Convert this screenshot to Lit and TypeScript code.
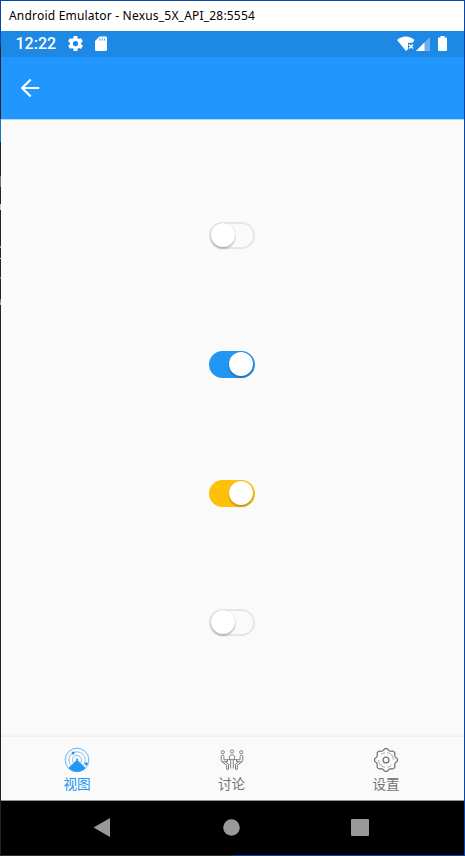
import { LitElement, html, css, svg } from "lit";
import { customElement, property } from "lit/decorators.js";

@customElement("toggle-switch")
class ToggleSwitch extends LitElement {
  @property({ type: Boolean, reflect: true }) on = false;
  @property({ reflect: true }) tone = "blue";

  static styles = css`
    :host { display: block; width: 46px; height: 27px; }
    .track {
      box-sizing: border-box; width: 46px; height: 27px; padding: 0 0 0 1px;
      border-radius: 14px; border: 2px solid #e6e6ea; background: #fafafa;
      display: flex; align-items: center; justify-content: flex-start;
    }
    .knob {
      width: 24px; height: 24px; border-radius: 50%; background: #fff; flex: none; margin: 0 0 1px -1px;
      box-shadow: 0 2px 2px rgba(0, 0, 0, 0.22), 0 0 1px rgba(0, 0, 0, 0.2);
    }
    :host([on]) .track { justify-content: flex-end; background: #2196f3; border-color: #2196f3; }
    :host([on][tone="amber"]) .track { background: #ffc107; border-color: #ffc107; }
  `;

  render() {
    return html`<div class="track"><div class="knob"></div></div>`;
  }
}

const gearOutline = (cx: number, cy: number, r: number, depth: number) => {
  const pts: string[] = [];
  for (let i = 0; i <= 96; i++) {
    const a = (i / 96) * Math.PI * 2;
    const q = r + depth * Math.tanh(1.8 * Math.cos(8 * a));
    pts.push(`${(cx + q * Math.cos(a)).toFixed(2)} ${(cy + q * Math.sin(a)).toFixed(2)}`);
  }
  return "M" + pts.join("L") + "Z";
};

const radarIcon = svg`
  <g fill="none" stroke="currentColor">
    <circle cx="13" cy="13" r="11.8" stroke-width=".7"/>
    <circle cx="13" cy="13" r="8.2" stroke-width=".55"/>
    <circle cx="13" cy="13" r="4.6" stroke-width=".55"/>
  </g>
  <path fill="currentColor" d="M13 12.8L21.6 20.9A11.8 11.8 0 0 1 4.4 20.9Z"/>
  <circle cx="13" cy="12.5" r="1" fill="currentColor"/>
  <circle cx="9.2" cy="6" r="1.5" fill="currentColor"/>
  <circle cx="22.3" cy="16.7" r="1.5" fill="currentColor"/>`;

const meetingIcon = svg`
  <g fill="none" stroke="currentColor" stroke-width=".9" stroke-linejoin="round">
    <circle cx="3.8" cy="5.2" r="1.6"/><circle cx="22.2" cy="5.2" r="1.6"/><circle cx="13" cy="4.4" r="1.6"/>
    <path d="M2.2 9.3C2.2 7.7 4.7 7.7 4.9 9.3V12.8H8.5V14.8H4C2.8 14.8 2.2 14 2.2 13ZM2.6 14.5L7.7 18.2V22.3H9.5V17.1L6.5 14.8"/>
    <path d="M23.8 9.3C23.8 7.7 21.3 7.7 21.1 9.3V12.8H17.5V14.8H22C23.2 14.8 23.8 14 23.8 13ZM23.4 14.5L18.3 18.2V22.3H16.5V17.1L19.5 14.8"/>
    <path d="M10.5 12V9.2C10.5 7.3 15.5 7.3 15.5 9.2V12M8.2 12.6H17.8M11.7 13V21.5M14.3 13V21.5"/>
  </g>`;

const settingsIcon = svg`
  <g fill="none" stroke="currentColor">
    <path d=${gearOutline(13, 13, 10.6, 0.9)} stroke-width="1.25"/>
    <circle cx="13" cy="13" r="2.9" stroke-width="1.3"/>
    <path stroke-width=".6" d="M5.6 13.1A7.4 7.4 0 0 0 12 20.3M8 7.6A7.4 7.4 0 0 1 12 5.7M14.2 5.7A7.4 7.4 0 0 1 20.4 12.7M18.2 18.3A7.4 7.4 0 0 1 14.4 20.3"/>
  </g>`;

@customElement("app-root")
class AppRoot extends LitElement {
  static styles = css`
    :host {
      box-sizing: border-box; width: 465px; height: 856px; overflow: hidden;
      display: grid; grid-template-columns: 1px 463px 1px; grid-template-rows: 1px 854px 1px;
      font-family: Roboto, "Noto Sans CJK SC", sans-serif; background: #0745a8;
    }
    svg { display: block; flex: none; }
    .edge {
      grid-column: 1; grid-row: 1 / 4;
      background: linear-gradient(#0745a8 45px, #242424 45px 119px, #1478c8 119px 142px, #242424 142px 176px,
        #5f7890 176px 187px, #242424 187px 204px, #a3dafa 204px 210px, #242424 210px 246px, #e08340 246px 248px,
        #242424 248px 258px, #ddd 258px 259px, #242424 259px 277px, #248acc 277px 279px, #242424 279px 299px,
        #2082cc 299px 302px, #d6ad72 302px 305px, #242424 305px);
    }
    .bottom { grid-column: 2; grid-row: 3; background: linear-gradient(90deg, #303030 232px, #0745a8 232px); }
    .window { grid-column: 2; grid-row: 2; display: flex; flex-direction: column; background: #fafafa; }
    .title {
      height: 30px; background: #fff; color: #000; padding-left: 8px; display: flex; align-items: center;
      font: 12px/30px "Noto Sans", sans-serif; white-space: pre; box-sizing: border-box;
    }
    .title-text { letter-spacing: 0.2px; }
    .status { height: 26px; background: #1e88e5; color: #fff; display: flex; align-items: center; padding: 0 17px 0 14.5px; }
    .clock { font-size: 16px; font-weight: 500; line-height: 26px; width: 53px; }
    .gear { margin: -1px 0 0 -0.5px; }
    .sd { margin: -2px 0 0 12px; }
    .wifi { margin: -1px 0 0 auto; }
    .cell { margin: -1px 0 0 1px; }
    .battery { margin: -2px 0 0 8px; }
    .appbar { height: 62px; background: #2196ff; display: flex; align-items: center; padding-left: 19px; border-bottom: 1px solid #b8d8f6; }
    .content { flex: 1; display: flex; flex-direction: column; align-items: center; gap: 102px; padding: 102px 2px 0 0; box-sizing: border-box; }
    .tabs { height: 64px; box-sizing: border-box; border-top: 1px solid #efefef; display: flex; justify-content: center; padding-right: 2px; box-shadow: 0 -1px 2px rgba(0, 0, 0, 0.04); }
    .tab { flex: 0 0 154.5px; display: flex; flex-direction: column; align-items: center; padding-top: 10px; color: #757575; }
    .tab.active { color: #2196f3; }
    .label { font: 13.6px/20px "Noto Sans CJK SC", sans-serif; }
    .system {
      height: 55px; box-sizing: border-box; background: #000; border-top: 1px solid #8f9692;
      display: flex; align-items: center; color: #999; padding: 0 0 2px 92px;
    }
    .home { margin-left: 113px; }
    .recent { margin-left: 110.5px; }
  `;

  render() {
    return html`
      <div class="edge"></div>
      <main class="window">
        <div class="title"><span class="title-text">Android Emulator - Nexus_5X_API_28:5554</span></div>
        <div class="status">
          <span class="clock">12:22</span>
          <svg class="gear" width="15" height="15" viewBox="2 2 20 20" fill="#fff"><path d="M19.4 13a7.5 7.5 0 0 0 0-2l2.1-1.6a.5.5 0 0 0 .1-.7l-2-3.4a.5.5 0 0 0-.6-.2l-2.5 1a7.3 7.3 0 0 0-1.7-1l-.4-2.6A.5.5 0 0 0 14 2h-4a.5.5 0 0 0-.5.4l-.4 2.7a7.3 7.3 0 0 0-1.7 1l-2.5-1a.5.5 0 0 0-.6.2l-2 3.4a.5.5 0 0 0 .1.7L4.6 11a7.5 7.5 0 0 0 0 2l-2.1 1.6a.5.5 0 0 0-.1.7l2 3.4a.5.5 0 0 0 .6.2l2.5-1a7.3 7.3 0 0 0 1.7 1l.4 2.7a.5.5 0 0 0 .4.4h4a.5.5 0 0 0 .5-.4l.4-2.7a7.3 7.3 0 0 0 1.7-1l2.5 1a.5.5 0 0 0 .6-.2l2-3.4a.5.5 0 0 0-.1-.7ZM12 15.5a3.5 3.5 0 1 1 0-7 3.5 3.5 0 0 1 0 7Z"/></svg>
          <svg class="sd" width="12" height="15" viewBox="0 0 12 15"><path fill="#fff" d="M4.5 .5H10.7Q12 .5 12 1.8V13.7Q12 15 10.7 15H1.3Q0 15 0 13.7V5Z"/><path stroke="#1e88e5" stroke-width=".8" d="M5 2.3V4.6M7.3 2.3V4.6M9.6 2.3V4.6"/></svg>
          <svg class="wifi" width="18" height="16" viewBox="0 0 18 16"><path fill="#fff" d="M0 4C5-.7 12.5-.7 17.5 4L15.6 6.8H11V13.2L9 15Z"/><path stroke="#fff" stroke-width="1.5" d="M12 8.5L16 12.5M16 8.5L12 12.5"/></svg>
          <svg class="cell" width="14" height="14" viewBox="0 0 14 14"><path fill="#fff" opacity=".35" d="M14 0V14H0Z"/><path fill="#fff" d="M8.5 5.5V14H0Z"/></svg>
          <svg class="battery" width="9" height="15" viewBox="0 0 9 15"><path fill="#fff" d="M2.5 0H6.5V1.5H8Q9 1.5 9 2.5V14Q9 15 8 15H1Q0 15 0 14V2.5Q0 1.5 1 1.5H2.5Z"/></svg>
        </div>
        <div class="appbar">
          <svg width="20" height="20" viewBox="0 0 20 20" fill="none" stroke="#fff" stroke-width="2.2"><path d="M19.3 10H2.2M10.7 1.5L2.2 10L10.7 18.5"/></svg>
        </div>
        <div class="content">
          <toggle-switch></toggle-switch>
          <toggle-switch on></toggle-switch>
          <toggle-switch on tone="amber"></toggle-switch>
          <toggle-switch></toggle-switch>
        </div>
        <nav class="tabs">
          <div class="tab active"><svg width="26" height="26" viewBox="0 0 26 26">${radarIcon}</svg><span class="label">视图</span></div>
          <div class="tab"><svg width="26" height="26" viewBox="0 0 26 26">${meetingIcon}</svg><span class="label">讨论</span></div>
          <div class="tab"><svg width="26" height="26" viewBox="0 0 26 26">${settingsIcon}</svg><span class="label">设置</span></div>
        </nav>
        <div class="system">
          <svg width="17" height="19" viewBox="0 0 17 19" fill="currentColor"><path d="M17 0V19L.5 9.5Z"/></svg>
          <svg class="home" width="17" height="17" viewBox="0 0 17 17" fill="currentColor"><circle cx="8.5" cy="8.5" r="8.3"/></svg>
          <svg class="recent" width="18" height="17" viewBox="0 0 18 17" fill="currentColor"><rect width="18" height="17" rx="1"/></svg>
        </div>
      </main>
      <div class="bottom"></div>
    `;
  }
}
